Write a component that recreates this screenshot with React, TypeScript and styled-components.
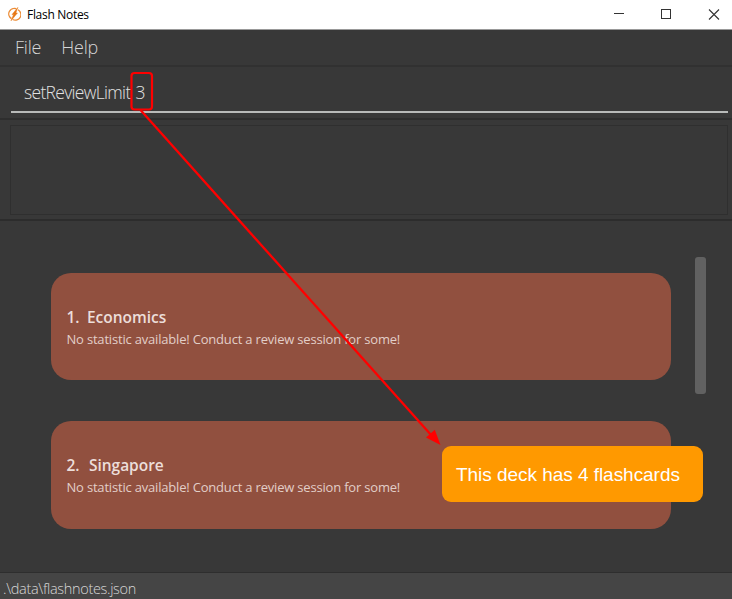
import React from "react";
import styled, { createGlobalStyle } from "styled-components";

const GlobalStyle = createGlobalStyle`
  * { box-sizing: border-box; }
  body { margin: 0; background: #383838; overflow: hidden; }
`;

const Window = styled.div`
  position: relative;
  display: flex;
  flex-direction: column;
  width: 732px;
  height: 599px;
  background: #383838;
  font-family: "Open Sans", "Noto Sans", sans-serif;
  white-space: pre;
`;

const TitleBar = styled.header`
  display: flex;
  align-items: center;
  height: 30px;
  padding: 0 12px 1px 8px;
  background: #fff;
  border-bottom: 1px solid #999;
  color: #000;
`;

const Title = styled.h1`
  flex: 1;
  margin: 2px 0 0 6px;
  font-size: 12px;
  font-weight: 400;
  line-height: 18px;
  letter-spacing: -0.3px;
`;

const WindowControls = styled.div`
  display: flex;
  align-items: center;
  gap: 36px;
`;

const MenuBar = styled.nav`
  display: flex;
  align-items: center;
  gap: 20px;
  height: 37px;
  padding: 0 15px 1px;
  border-bottom: 2px solid #313131;
`;

const MenuItem = styled.span`
  font-size: 18px;
  font-weight: 300;
  line-height: 24px;
  letter-spacing: -0.2px;
  color: #d6d6d6;
`;

const CommandPane = styled.section`
  height: 53px;
  padding: 6px 4px 0 11px;
  border-bottom: 2px solid #2e2e2e;
`;

const CommandField = styled.div`
  display: flex;
  align-items: center;
  gap: 5px;
  height: 40px;
  padding: 0 0 1px 13px;
  border-bottom: 2px solid #b8bab9;
  font-size: 17.5px;
  font-weight: 300;
  letter-spacing: -0.68px;
  color: #e2e2e2;
`;

const ResultPane = styled.section`
  height: 101px;
  padding: 5px 4px 5px 10px;
  border-bottom: 2px solid #2c2c2c;
`;

const ResultBox = styled.div`
  height: 90px;
  border: 1px solid #2f2f2f;
`;

const DeckPane = styled.main`
  display: flex;
  justify-content: space-between;
  height: 351px;
  padding: 36px 26px 0 51px;
`;

const DeckList = styled.div`
  display: flex;
  flex-direction: column;
  gap: 41px;
  width: 620px;
  padding-top: 15.5px;
`;

const DeckCard = styled.article`
  height: 107.5px;
  padding: 33px 16px 0 15.5px;
  border-radius: 20px;
  background: #91503f;
`;

const DeckName = styled.h2`
  display: flex;
  margin: 0 0 1px;
  font-size: 15.5px;
  font-weight: 600;
  line-height: 22px;
  letter-spacing: -0.03px;
  color: #ecdeda;
`;

const DeckIndex = styled.span<{ $width: number }>`
  width: ${(p) => p.$width}px;
`;

const DeckStat = styled.p`
  margin: 0;
  font-size: 13px;
  line-height: 20px;
  letter-spacing: -0.19px;
  color: #e2cec8;
`;

const ScrollThumb = styled.div`
  width: 11.5px;
  height: 137px;
  border-radius: 3px;
  background: #616161;
`;

const StatusBar = styled.footer`
  display: flex;
  align-items: center;
  flex: 1;
  padding: 6px 4px 0 3px;
  border-top: 1px solid #2e2e2e;
  background: #454545;
  font-size: 14.5px;
  font-weight: 300;
  line-height: 20px;
  letter-spacing: -0.32px;
  color: #d8d8d8;
`;

const Annotation = styled.svg`
  position: absolute;
  left: 0;
  top: 0;
  pointer-events: none;
`;

const Callout = styled.div`
  position: absolute;
  left: 442px;
  top: 446px;
  display: flex;
  align-items: center;
  width: 261px;
  height: 56px;
  padding: 1px 0 0 14px;
  border-radius: 9px;
  background: #ff9900;
  color: #fff;
  font-family: "Liberation Sans", Arial, sans-serif;
  font-size: 19px;
  letter-spacing: -0.04px;
`;

const decks = [
  { index: "1.", name: "Economics", indent: 20.5 },
  { index: "2.", name: "Singapore", indent: 22.5 },
];

function AppLogo() {
  return (
    <svg width="13" height="14" viewBox="0 0 13 14">
      <g fill="none" stroke="#ec8c36" strokeWidth="1.3">
        <path d="M8.2 1.7A5.5 5.5 0 0 0 3.5 11.6" />
        <path d="M10 2.7A5.5 5.5 0 0 1 4.7 12.5" />
      </g>
      <path d="M9.8 .4 4 7.6 5.6 7.6 3 13.8 9.4 6 7.8 6Z" fill="#e77817" stroke="#e77817" strokeWidth=".5" />
    </svg>
  );
}

export default function App() {
  return (
    <>
      <GlobalStyle />
      <Window>
        <TitleBar>
          <AppLogo />
          <Title>Flash Notes</Title>
          <WindowControls>
            <svg width="11" height="11" viewBox="0 0 11 11">
              <path d="M0 4.5H10" stroke="#333" />
            </svg>
            <svg width="11" height="11" viewBox="0 0 11 11">
              <rect x=".5" y=".5" width="9" height="9" fill="none" stroke="#333" />
            </svg>
            <svg width="12" height="11" viewBox="0 0 12 11">
              <path d="M1 .5 11 10.5M11 .5 1 10.5" stroke="#333" strokeWidth="1.1" />
            </svg>
          </WindowControls>
        </TitleBar>
        <MenuBar>
          <MenuItem>File</MenuItem>
          <MenuItem>Help</MenuItem>
        </MenuBar>
        <CommandPane>
          <CommandField>
            <span>setReviewLimit</span>
            <span>3</span>
          </CommandField>
        </CommandPane>
        <ResultPane>
          <ResultBox />
        </ResultPane>
        <DeckPane>
          <DeckList>
            {decks.map((d) => (
              <DeckCard key={d.name}>
                <DeckName>
                  <DeckIndex $width={d.indent}>{d.index}</DeckIndex>
                  <span>{d.name}</span>
                </DeckName>
                <DeckStat>No statistic available! Conduct a review session for some!</DeckStat>
              </DeckCard>
            ))}
          </DeckList>
          <ScrollThumb />
        </DeckPane>
        <StatusBar>.\data\flashnotes.json</StatusBar>
        <Annotation width="732" height="599" viewBox="0 0 732 599">
          <rect x="131.5" y="73" width="20.5" height="36.5" rx="3" fill="none" stroke="#f00" strokeWidth="2.2" />
          <path d="M140.5 110 432 436" stroke="#f00" strokeWidth="2.3" />
          <path d="M440.5 445 426 437.5 434.8 429.8Z" fill="#f00" />
        </Annotation>
        <Callout>This deck has 4 flashcards</Callout>
      </Window>
    </>
  );
}
